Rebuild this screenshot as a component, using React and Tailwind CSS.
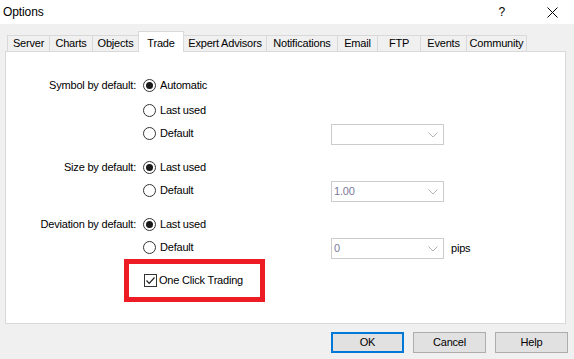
import React from "react";

const font = { fontFamily: '"Liberation Sans", Arial, sans-serif' };

function Radio({ checked }) {
  return (
    <span className="relative flex h-[13px] w-[13px] shrink-0 items-center justify-center rounded-full border border-[#333333] bg-white">
      {checked && <span className="block h-[7px] w-[7px] rounded-full bg-[#1a1a1a]" />}
    </span>
  );
}

function Combo({ value }) {
  return (
    <div className="flex h-[21px] w-[113px] items-center justify-between border border-[#cccccc] bg-white pl-[2px] pr-[5px] text-[#7a7a9a]">
      <span>{value}</span>
      <svg width="10" height="6" viewBox="0 0 10 6" className="mt-[2px]">
        <path d="M0.5 0.5 L5 5 L9.5 0.5" fill="none" stroke="#b5b5b5" strokeWidth="1" />
      </svg>
    </div>
  );
}

function Row({ label, checked, text, combo, pips, className = "" }) {
  return (
    <div className={"flex h-[20px] items-center " + className}>
      <div className="w-[131px] pr-px text-right text-black">{label}</div>
      <div className="ml-[6px] flex w-[188px] items-center gap-[4px]">
        <Radio checked={checked} />
        <span className="text-black">{text}</span>
      </div>
      {combo !== undefined && (
        <div className="mt-[2px]">
          <Combo value={combo} />
        </div>
      )}
      {pips && <span className="ml-[7px] mt-[2px] text-black">pips</span>}
    </div>
  );
}

export default function App() {
  const tabs = [
    { n: "Server", w: "w-[42px]", cls: "border-l" },
    { n: "Charts", w: "w-[43px]", cls: "border-l" },
    { n: "Objects", w: "w-[46px]", cls: "border-l" },
  ];
  const tabs2 = [
    { n: "Expert Advisors", w: "w-[82px]", cls: "" },
    { n: "Notifications", w: "w-[71px]", cls: "border-l" },
    { n: "Email", w: "w-[40px]", cls: "border-l" },
    { n: "FTP", w: "w-[43px]", cls: "border-l" },
    { n: "Events", w: "w-[46px]", cls: "border-l" },
    { n: "Community", w: "w-[61px]", cls: "border-l border-r" },
  ];
  return (
    <div
      className="flex h-[359px] w-[574px] flex-col overflow-hidden bg-[#f0f0f0] text-[11px] tracking-[-0.2px] text-black"
      style={font}
    >
      {/* Title bar */}
      <div className="flex h-[24px] shrink-0 items-center bg-white">
        <span className="ml-[3px] text-[12px] tracking-[-0.1px]">Options</span>
        <span className="ml-auto mr-[42px] text-[12px]">?</span>
        <svg width="11" height="11" viewBox="0 0 11 11" className="mr-[16px]">
          <path d="M0.5 0.5 L10.5 10.5 M10.5 0.5 L0.5 10.5" stroke="#000" strokeWidth="1" />
        </svg>
      </div>

      {/* Tabs */}
      <div className="mt-[7px] flex h-[20px] items-end pl-[7px]">
        {tabs.map((t) => (
          <div
            key={t.n}
            className={`flex h-[16px] items-center justify-center border-t border-[#d9d9d9] bg-[#f0f0f0] ${t.w} ${t.cls}`}
          >
            {t.n}
          </div>
        ))}
        <div className="relative z-10 -mb-px flex h-[21px] w-[46px] items-start justify-center border-l border-r border-t border-[#d9d9d9] bg-white pt-[3px]">
          Trade
        </div>
        {tabs2.map((t) => (
          <div
            key={t.n}
            className={`flex h-[16px] items-center justify-center border-t border-[#d9d9d9] bg-[#f0f0f0] ${t.w} ${t.cls}`}
          >
            {t.n}
          </div>
        ))}
      </div>

      {/* Panel */}
      <div className="ml-[5px] flex h-[273px] w-[561px] flex-col border border-[#d9d9d9] bg-white pt-[23px]">
        <Row label="Symbol by default:" checked text="Automatic" />
        <Row label="" text="Last used" className="mt-[5px]" />
        <Row label="" text="Default" combo="" className="mt-[3px]" />
        <Row label="Size by default:" checked text="Last used" className="mt-[14px]" />
        <Row label="" text="Default" combo="1.00" className="mt-[3px]" />
        <Row label="Deviation by default:" checked text="Last used" className="mt-[14px]" />
        <Row label="" text="Default" combo="0" pips className="mt-[3px]" />
        <div className="ml-[118px] mt-[2px] flex h-[43px] w-[141px] items-center border-[5px] border-[#ed1c24] pl-[15px]">
          <span className="flex h-[13px] w-[13px] items-center justify-center border border-[#333333] bg-white">
            <svg width="11" height="11" viewBox="0 0 11 11">
              <path d="M1.5 5.5 L4.2 8.3 L9.5 2.5" fill="none" stroke="#222" strokeWidth="1.2" />
            </svg>
          </span>
          <span className="ml-[2px]">One Click Trading</span>
        </div>
      </div>

      {/* Buttons */}
      <div className="mt-[8px] flex justify-end gap-[9px] pr-[6px]">
        <button className="flex h-[21px] w-[73px] items-center justify-center border-2 border-[#0078d7] bg-[#e1e1e1]">
          OK
        </button>
        <button className="flex h-[21px] w-[73px] items-center justify-center border border-[#adadad] bg-[#e1e1e1]">
          Cancel
        </button>
        <button className="flex h-[21px] w-[73px] items-center justify-center border border-[#adadad] bg-[#e1e1e1]">
          Help
        </button>
      </div>
    </div>
  );
}
